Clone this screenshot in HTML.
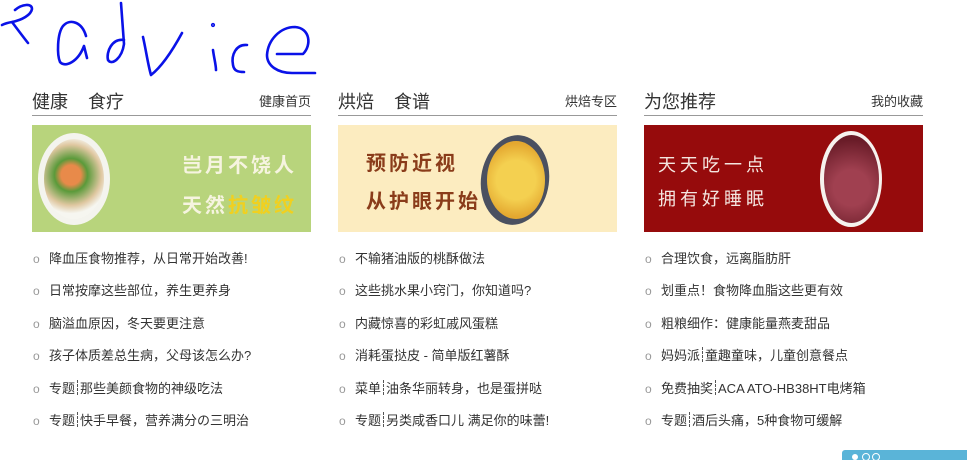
<!DOCTYPE html>
<html><head><meta charset="utf-8"><style>
*{margin:0;padding:0;box-sizing:border-box}
body{width:967px;height:460px;background:#fff;position:relative;overflow:hidden;font-family:"Liberation Sans","Noto Sans CJK SC",sans-serif;color:#333}
.col{position:absolute;top:86px;width:279px}
.hd{height:30px;border-bottom:1px solid #999;position:relative}
.hd .t{position:absolute;left:0;top:2px;font-size:18px;color:#333}
.hd .m{position:absolute;right:0;top:5px;font-size:13px;color:#333}
.img{margin-top:9px;height:107px;position:relative;overflow:hidden}
ul{list-style:none;margin-top:17px}
li{height:32.4px;font-size:13px;line-height:20px;padding-left:17px;position:relative;white-space:nowrap}
li:before{content:"o";position:absolute;left:1px;top:0;color:#999;font-size:12px}
.sep{display:inline-block;width:0;height:15px;border-left:1px dashed #555;vertical-align:-2px;margin:0 2px}
.btxt{position:absolute;font-size:20px;letter-spacing:3px;font-weight:bold}
</style></head><body>
<svg style="position:absolute;left:0;top:0" width="330" height="85" fill="none" stroke="#0a12e8" stroke-width="2.6" stroke-linecap="round" stroke-linejoin="round">
<path d="M15,10 C22,4 32,3 32,9 C31,15 22,20 12,22 C6,23 2,25 2,25 M12,22 C18,30 24,38 28,43"/>
<path d="M86,36 C82,22 70,18 63,26 C57,34 57,55 60,62 C65,68 78,62 84,46 L87,58"/>
<path d="M124,40 C112,38 106,52 108,60 C112,66 122,58 124,44 L121,3"/>
<path d="M143,37 C146,50 148,65 151,75 C160,68 170,55 182,33"/>
<path d="M213,50 C214,58 216,65 216,70"/>
<circle cx="213" cy="25" r="0.8"/>
<path d="M247,45 C236,44 231,55 233,65 C234,71 238,72 244,72"/>
<path d="M277,54 L303,54 C312,45 310,28 295,27 C280,27 268,40 267,55 C267,66 278,73 292,73 C305,73 312,73 315,73"/>
</svg>

<div class="col" style="left:32px">
<div class="hd"><span class="t">健康&nbsp;&nbsp;&nbsp;&nbsp;食疗</span><span class="m">健康首页</span></div>
<div class="img" style="background:#b8d47c">
<div style="position:absolute;left:6px;top:8px;width:72px;height:92px;border-radius:50%;background:#f4f4ee"></div>
<div style="position:absolute;left:12px;top:14px;width:60px;height:80px;border-radius:50%;background:radial-gradient(circle at 45% 45%,#e88a4a 0 18%,#5a9a3a 30%,#dfc7a0 55%,#f6f6f0 70%)"></div>
<div class="btxt" style="left:150px;top:24px;color:#f6f4e0">岂月不饶人</div>
<div class="btxt" style="left:150px;top:64px;color:#f6f4e0">天然<span style="color:#f0d020">抗皱纹</span></div>
</div>
<ul>
<li>降血压食物推荐，从日常开始改善!</li>
<li>日常按摩这些部位，养生更养身</li>
<li>脑溢血原因，冬天要更注意</li>
<li>孩子体质差总生病，父母该怎么办?</li>
<li>专题<span class="sep"></span>那些美颜食物的神级吃法</li>
<li>专题<span class="sep"></span>快手早餐，营养满分の三明治</li>
</ul>
</div>

<div class="col" style="left:338px">
<div class="hd"><span class="t">烘焙&nbsp;&nbsp;&nbsp;&nbsp;食谱</span><span class="m">烘焙专区</span></div>
<div class="img" style="background:#fcecc0">
<div class="btxt" style="left:28px;top:22px;color:#8a3c1a">预防近视</div>
<div class="btxt" style="left:28px;top:60px;color:#8a3c1a">从护眼开始</div>
<div style="position:absolute;left:143px;top:10px;width:68px;height:90px;border-radius:50%;background:#4a5060;transform:rotate(8deg)"></div>
<div style="position:absolute;left:149px;top:16px;width:58px;height:78px;border-radius:50%;background:radial-gradient(circle,#f4d050 0 40%,#e4a830 75%)"></div>
</div>
<ul>
<li>不输猪油版的桃酥做法</li>
<li>这些挑水果小窍门，你知道吗?</li>
<li>内藏惊喜的彩虹戚风蛋糕</li>
<li>消耗蛋挞皮 - 简单版红薯酥</li>
<li>菜单<span class="sep"></span>油条华丽转身，也是蛋拼哒</li>
<li>专题<span class="sep"></span>另类咸香口儿 满足你的味蕾!</li>
</ul>
</div>

<div class="col" style="left:644px">
<div class="hd"><span class="t">为您推荐</span><span class="m">我的收藏</span></div>
<div class="img" style="background:#960b0c">
<div class="btxt" style="left:14px;top:26px;color:#f4e6e0;font-weight:normal;font-size:18px;letter-spacing:4px">天天吃一点</div>
<div class="btxt" style="left:14px;top:60px;color:#f4e6e0;font-weight:normal;font-size:18px;letter-spacing:4px">拥有好睡眠</div>
<div style="position:absolute;left:176px;top:6px;width:62px;height:96px;border-radius:50%;background:#f6f2ee"></div>
<div style="position:absolute;left:180px;top:10px;width:55px;height:88px;border-radius:50%;background:radial-gradient(circle at 50% 60%,#a04050 0 30%,#6a1c28 80%)"></div>
</div>
<ul>
<li>合理饮食，远离脂肪肝</li>
<li>划重点！食物降血脂这些更有效</li>
<li>粗粮细作：健康能量燕麦甜品</li>
<li>妈妈派<span class="sep"></span>童趣童味，儿童创意餐点</li>
<li>免费抽奖<span class="sep"></span>ACA ATO-HB38HT电烤箱</li>
<li>专题<span class="sep"></span>酒后头痛，5种食物可缓解</li>
</ul>
</div>

<div style="position:absolute;left:842px;top:450px;width:125px;height:10px;background:#5ab4d8;border-radius:3px 0 0 0">
<div style="position:absolute;left:10px;top:4px;width:6px;height:6px;border-radius:50%;background:#fff"></div>
<div style="position:absolute;left:20px;top:3px;width:8px;height:8px;border-radius:50%;border:1.5px solid #fff"></div>
<div style="position:absolute;left:30px;top:3px;width:8px;height:8px;border-radius:50%;border:1.5px solid #fff"></div>
</div>
</body></html>
